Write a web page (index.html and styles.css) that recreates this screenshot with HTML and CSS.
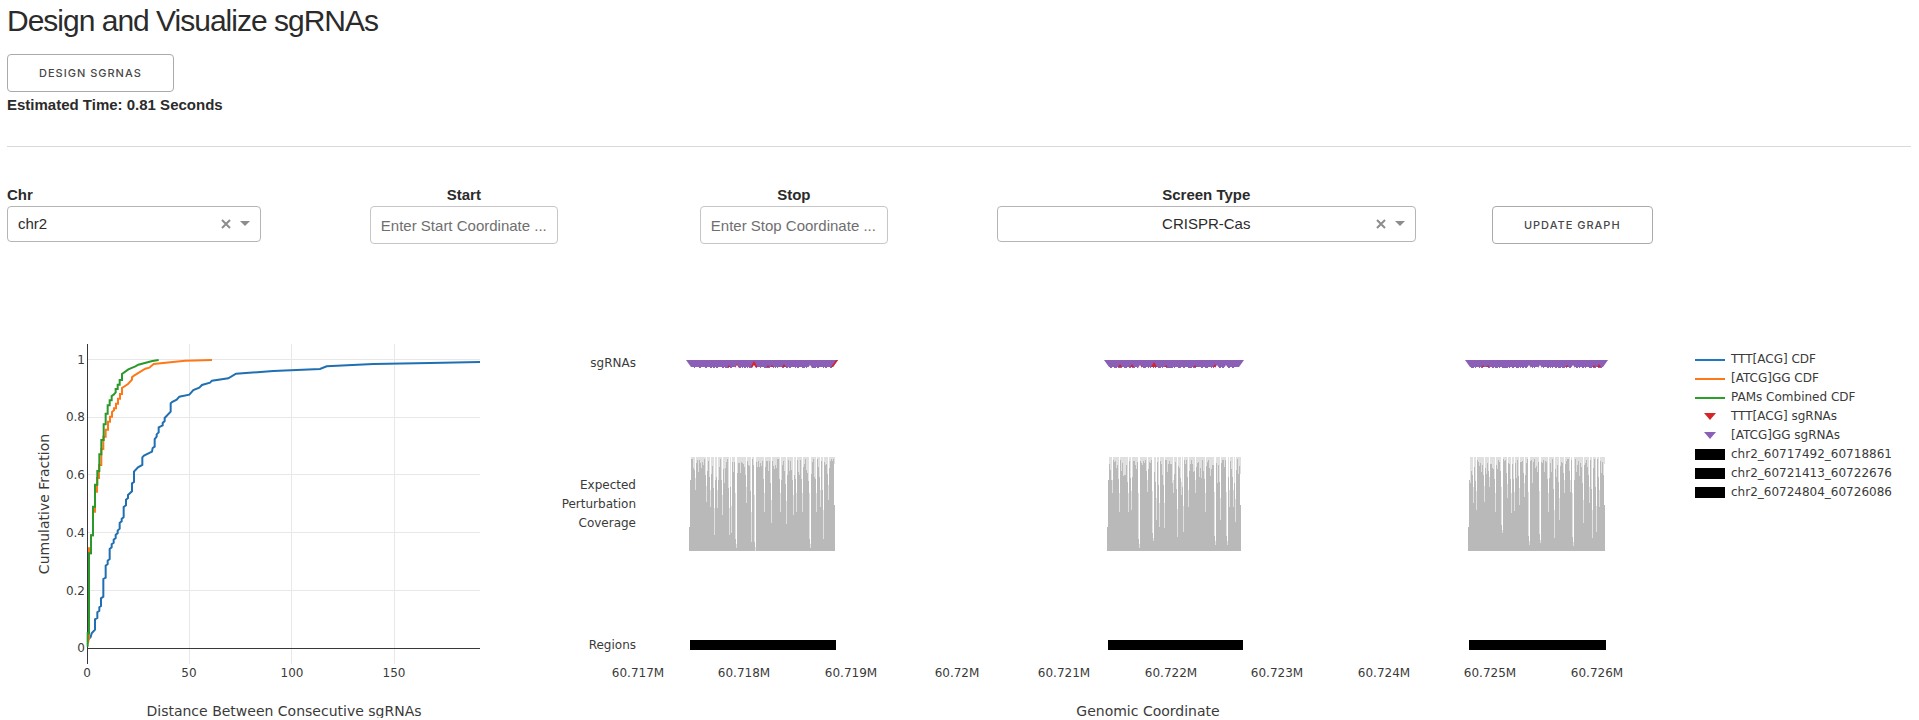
FILE: index.html
```
<!DOCTYPE html>
<html lang="en">
<head>
<meta charset="utf-8">
<title>Design and Visualize sgRNAs</title>
<link rel="stylesheet" href="styles.css">
</head>
<body>
<main class="page">
  <header class="intro">
    <h1 class="title">Design and Visualize sgRNAs</h1>
    <button class="button" type="button">Design sgRNAs</button>
    <p class="estimate">Estimated Time: 0.81 Seconds</p>
  </header>

  <form class="controls">
    <div class="field field-left">
      <label for="chr">Chr</label>
      <div class="dropdown">
        <select id="chr"><option>chr2</option></select>
        <button class="clear" type="button" aria-label="Clear chromosome"><svg viewBox="0 0 10 10"><path d="M1 1L9 9M9 1L1 9"/></svg></button>
        <span class="arrow"></span>
      </div>
    </div>
    <div class="field">
      <label for="start">Start</label>
      <input id="start" type="text" placeholder="Enter Start Coordinate ...">
    </div>
    <div class="field">
      <label for="stop">Stop</label>
      <input id="stop" type="text" placeholder="Enter Stop Coordinate ...">
    </div>
    <div class="field">
      <label for="screen">Screen Type</label>
      <div class="dropdown">
        <select id="screen"><option>CRISPR-Cas</option></select>
        <button class="clear" type="button" aria-label="Clear screen type"><svg viewBox="0 0 10 10"><path d="M1 1L9 9M9 1L1 9"/></svg></button>
        <span class="arrow"></span>
      </div>
    </div>
    <div class="action">
      <button class="button" type="button">Update Graph</button>
    </div>
  </form>

  <section class="graph">
    <svg class="cdf" viewBox="7 330 533 388" role="img" aria-label="Cumulative fraction of distances">
      <path class="grid" d="M189.5 344V664M291.5 344V664M394.5 344V664M87 359.5H480M87 417.5H480M87 474.5H480M87 532.5H480M87 590.5H480"/>
      <path class="axis" d="M87.5 344V664M87 648.5H480"/>
      <g class="curves" transform="translate(20 330) scale(.33333)">
        <path class="blue" d="M203 930L212 921L215 910L225 899V868L232 864V847L238 842V832L243 828V805L250 800V747L257 743V707L263 702V692L269 687V657L275 652V643L281 638V629L287 624V615L293 609V602L299 596V579L305 574V567L311 561V531L318 526V509L324 504V495L336 484V460L342 456V425L354 412L367 405V382L372 377L396 365L398 354L404 350V327L410 320V313L416 307V292L428 286V279L434 273V264L452 245V220L456 216L470 209L478 200L508 194L520 180L538 173L546 165L570 158L576 152L625 145L648 131L760 123L900 117L920 109L1060 102L1230 99L1380 96"/>
        <path class="orange" d="M204 940L207 922V652L209 670H213V616H219V545H225V485H231V444H237V405H244V357H250V320H257V299H264V275H270V260H276V246L282 241V235H288V221H294V206H300V192H306V174L324 162L336 149V142L342 137L376 116L388 113L401 102L495 92L576 90"/>
        <path class="green" d="M203 950V910H207V670H213V616H219V530H225V464H232V423H238V373H244V330H251V283H257V251H263V226H269V211H275V198L281 194L287 187V177H293V164H299V150H306V132L325 118L346 109L355 104L397 93L416 90"/>
      </g>
      <g class="tick end">
        <text x="85" y="364">1</text><text x="85" y="421">0.8</text><text x="85" y="479">0.6</text>
        <text x="85" y="537">0.4</text><text x="85" y="595">0.2</text><text x="85" y="652">0</text>
      </g>
      <g class="tick middle">
        <text x="87" y="677">0</text><text x="189" y="677">50</text><text x="292" y="677">100</text><text x="394" y="677">150</text>
      </g>
      <text class="axis-title" x="284" y="716">Distance Between Consecutive sgRNAs</text>
      <text class="axis-title" transform="translate(49 504) rotate(-90)">Cumulative Fraction</text>
    </svg>

    <svg class="tracks" viewBox="540 330 1140 388" role="img" aria-label="sgRNAs and coverage by genomic coordinate">
      <g id="guides"></g>
      <g id="coverage"></g>
      <path d="M690 640H836V650H690ZM1108 640H1243V650H1108ZM1469 640H1606V650H1469Z"/>
      <g class="tick end">
        <text x="636" y="367">sgRNAs</text>
        <text x="636" y="489">Expected</text><text x="636" y="508">Perturbation</text><text x="636" y="527">Coverage</text>
        <text x="636" y="649">Regions</text>
      </g>
      <g class="tick middle">
        <text x="638" y="677">60.717M</text><text x="744" y="677">60.718M</text><text x="851" y="677">60.719M</text>
        <text x="957" y="677">60.72M</text><text x="1064" y="677">60.721M</text><text x="1171" y="677">60.722M</text>
        <text x="1277" y="677">60.723M</text><text x="1384" y="677">60.724M</text><text x="1490" y="677">60.725M</text>
        <text x="1597" y="677">60.726M</text>
      </g>
      <text class="axis-title" x="1148" y="716">Genomic Coordinate</text>
    </svg>

    <ul class="legend">
      <li><span class="key line key-blue"></span>TTT[ACG] CDF</li>
      <li><span class="key line key-orange"></span>[ATCG]GG CDF</li>
      <li><span class="key line key-green"></span>PAMs Combined CDF</li>
      <li><span class="key mark key-red"></span>TTT[ACG] sgRNAs</li>
      <li><span class="key mark key-purple"></span>[ATCG]GG sgRNAs</li>
      <li><span class="key block"></span>chr2_60717492_60718861</li>
      <li><span class="key block"></span>chr2_60721413_60722676</li>
      <li><span class="key block"></span>chr2_60724804_60726086</li>
    </ul>
  </section>
</main>
<script src="tracks.js"></script>
</body>
</html>
```
FILE: styles.css
```
* { box-sizing: border-box; }

body {
  margin: 0;
  background: #fff;
  color: #2b2b2b;
  font: 15px/24px "Liberation Sans", Arial, sans-serif;
}

.page { padding: 3px 8px 0 7px; }

.intro {
  padding-bottom: 29px;
  border-bottom: 1px solid #d9d9d9;
}

.title {
  margin: 0 0 15px;
  font-size: 30px;
  font-weight: 400;
  line-height: 36px;
  letter-spacing: -1px;
}

.button {
  display: block;
  height: 38px;
  padding: 0 31px;
  border: 1px solid #aaa;
  border-radius: 4px;
  background: #fff;
  color: #484848;
  font: 500 11px/36px Inter, "Liberation Sans", sans-serif;
  letter-spacing: 1px;
  text-transform: uppercase;
  white-space: nowrap;
}

.estimate {
  margin: 1px 0 0;
  font-weight: 700;
}

.controls {
  display: grid;
  grid-template-columns: 13.33% 13.33% 13.33% 22% auto;
  column-gap: 4%;
  justify-content: start;
  padding-top: 37px;
}

.field {
  display: flex;
  flex-direction: column;
  align-items: center;
  text-align: center;
}

.field-left {
  align-items: flex-start;
  text-align: left;
}

.field label {
  font-weight: 700;
  line-height: 22px;
}

.field input {
  width: 188px;
  height: 38px;
  padding: 0 10px;
  border: 1px solid #c6c6c6;
  border-radius: 4px;
  color: inherit;
  font: inherit;
}

.field input::placeholder { color: #6f6f6f; }

.dropdown {
  position: relative;
  width: 100%;
}

.dropdown select {
  display: block;
  width: 100%;
  height: 36px;
  padding: 0 10px;
  appearance: none;
  border: 1px solid #b5b5b5;
  border-radius: 4px;
  background: #fff;
  color: inherit;
  font: inherit;
  text-align: inherit;
  text-align-last: inherit;
}

.clear {
  position: absolute;
  top: 13px;
  right: 30px;
  width: 10px;
  height: 10px;
  padding: 0;
  border: 0;
  background: none;
}

.clear svg {
  display: block;
  fill: none;
  stroke: #8c8c8c;
  stroke-width: 2;
}

.arrow {
  position: absolute;
  top: 15px;
  right: 11px;
  border: 5px solid transparent;
  border-top-color: #8c8c8c;
  border-bottom: 0;
  pointer-events: none;
}

.action { padding-top: 22px; }

.graph {
  display: flex;
  align-items: flex-start;
  padding-top: 86px;
  color: #3a3a3a;
  font: 12px/19px "DejaVu Sans", Verdana, sans-serif;
}

.graph svg {
  display: block;
  min-width: 0;
  overflow: visible;
}

.cdf { flex: 533 1 0; }
.tracks { flex: 1140 1 0; }

.grid,
.axis { shape-rendering: crispEdges; }

.grid { stroke: #e8e8e8; }
.axis { stroke: #383838; }

.curves path {
  fill: none;
  stroke-width: 6;
}

.blue { stroke: #1f6fb2; }
.orange { stroke: #ff7818; }
.green { stroke: #2a982a; }

.tick { fill: #3a3a3a; }
.end { text-anchor: end; }
.middle { text-anchor: middle; }

.axis-title {
  fill: #3a3a3a;
  font-size: 14px;
  text-anchor: middle;
}

.guide { fill: #8c5fb7; }
.guide-edge { fill: #d62427; }
.bars { fill: #b9b9b9; }
.fade { fill: #e0e0e0; }
.gap { fill: #fff; }

.bars,
.fade,
.coverage-gap { shape-rendering: crispEdges; }

.coverage-gap { fill: #fff; }

.legend {
  flex: none;
  width: 231px;
  margin: 0;
  padding: 20px 0 0 15px;
  list-style: none;
}

.legend li {
  display: flex;
  align-items: center;
  gap: 6px;
}

.key {
  flex: none;
  width: 30px;
}

.line { border-top: 2px solid; }
.key-blue { border-color: #1f77c0; }
.key-orange { border-color: #ff7818; }
.key-green { border-color: #2a9f2a; }

.mark {
  width: 12px;
  margin: 0 9px;
  border: 6px solid transparent;
  border-top-width: 7px;
  border-bottom: 0;
}

.key-red { border-top-color: #d62427; }
.key-purple { border-top-color: #8c5fb7; }

.block {
  height: 11px;
  background: #000;
}
```
FILE: tracks.js
```
// Each region: first and last x of its coverage, and gaps as [x, depth, half width].
const regions = [
  { from: 690, to: 835, gaps: [[695,33,1],[706,45,1],[710,50,1],[714,78,1],[717,51,1],[722,58,1],[729,78,1],[731,76,1],[736,91,2],[746,46,1],[751,85,1],[755,94,2],[764,55,1],[771,66,1],[780,55,1],[786,67,1],[793,58,1],[796,55,1],[802,55,1],[810,91,2],[816,55,1],[820,50,1],[823,82,1],[828,43,1]],
    red: [[737,2],[754,5],[784,2],[772,1],[729,1],[768,1]], notches: [737,754,810], redEnd: true },
  { from: 1108, to: 1241, gaps: [[1112,36,1],[1119,55,1],[1128,55,1],[1131,53,1],[1139,91,2],[1147,35,1],[1153,84,2],[1156,63,1],[1159,70,1],[1164,71,1],[1173,36,1],[1177,80,1],[1181,38,1],[1183,75,1],[1188,50,1],[1195,36,1],[1205,55,1],[1215,88,2],[1220,63,1],[1227,88,2],[1229,50,1],[1233,50,1],[1235,65,1]],
    red: [[1154,4],[1132,2],[1120,2],[1166,1],[1195,1],[1215,2],[1141,1]], notches: [1140,1217,1226], redEnd: false },
  { from: 1469, to: 1605, gaps: [[1473,46,1],[1476,53,1],[1484,45,1],[1489,30,1],[1495,55,1],[1502,76,2],[1507,41,1],[1511,56,1],[1514,54,1],[1519,48,1],[1524,40,1],[1529,88,2],[1540,86,2],[1548,55,1],[1554,81,1],[1559,63,1],[1564,36,1],[1570,35,1],[1573,89,2],[1583,66,1],[1589,46,1],[1592,81,1],[1596,75,1],[1599,50,1]],
    red: [[1599,2],[1594,1],[1488,1],[1483,1],[1567,1]], notches: [1529,1540,1573], redEnd: false }
];

const TOP = 457;
const BASE = 551;
let seed = 11;
const random = () => (seed = (seed * 16807) % 2147483647) / 2147483647;
const column = (x, depth) => `M${x} ${TOP}h1v${Math.round(depth)}h-1z`;

let coverage = '';
let guides = '';
for (const r of regions) {
  coverage += `<path class="bars" d="M${r.from - 1} ${BASE}L${r.from + 1} ${TOP}H${r.to - 1}L${r.to} ${BASE}Z"/>`;
  let fade = '';
  let gap = '';
  for (let x = r.from + 1; x < r.to; x++) {
    fade += column(x, 2 + 26 * random() * random());
  }
  for (const [x, depth, half] of r.gaps) {
    fade += column(x, depth) + column(x - 1, depth * (half > 1 ? 0.9 : 0.4));
    gap += column(x, depth * (half > 1 ? 0.96 : 0.65));
    if (half > 1) gap += column(x - 1, depth * 0.4);
  }
  coverage += `<path class="fade" d="${fade}"/><path class="coverage-gap" d="${gap}"/>`;

  // Overlapping downward markers merge into one band with a dotted lower edge.
  guides += `<path class="guide" d="M${r.from - 4} 360H${r.to + 3}L${r.to - 2} 367H${r.from + 1}Z"/>`;
  let dots = '';
  for (let x = r.from + 2; x < r.to - 2; x++) if (random() < 0.55) dots += `M${x} 367h1v1h-1z`;
  guides += `<path class="guide" d="${dots}"/>`;
  guides += `<path class="guide-edge" d="${r.red.map(([x, h]) => `M${x - h / 2 - 1} 367L${x} ${366 - h}L${x + h / 2 + 1} 367z`).join('')}"/>`;
  guides += `<path class="gap" d="${r.notches.map(x => `M${x - 2} 368L${x} 365L${x + 2} 368z`).join('')}"/>`;
  if (r.redEnd) guides += `<path class="guide-edge" d="M${r.to + 3} 360L${r.to - 2} 367H${r.to - 4}L${r.to + 1} 360Z"/>`;
}
document.getElementById('coverage').innerHTML = coverage;
document.getElementById('guides').innerHTML = guides;
```
